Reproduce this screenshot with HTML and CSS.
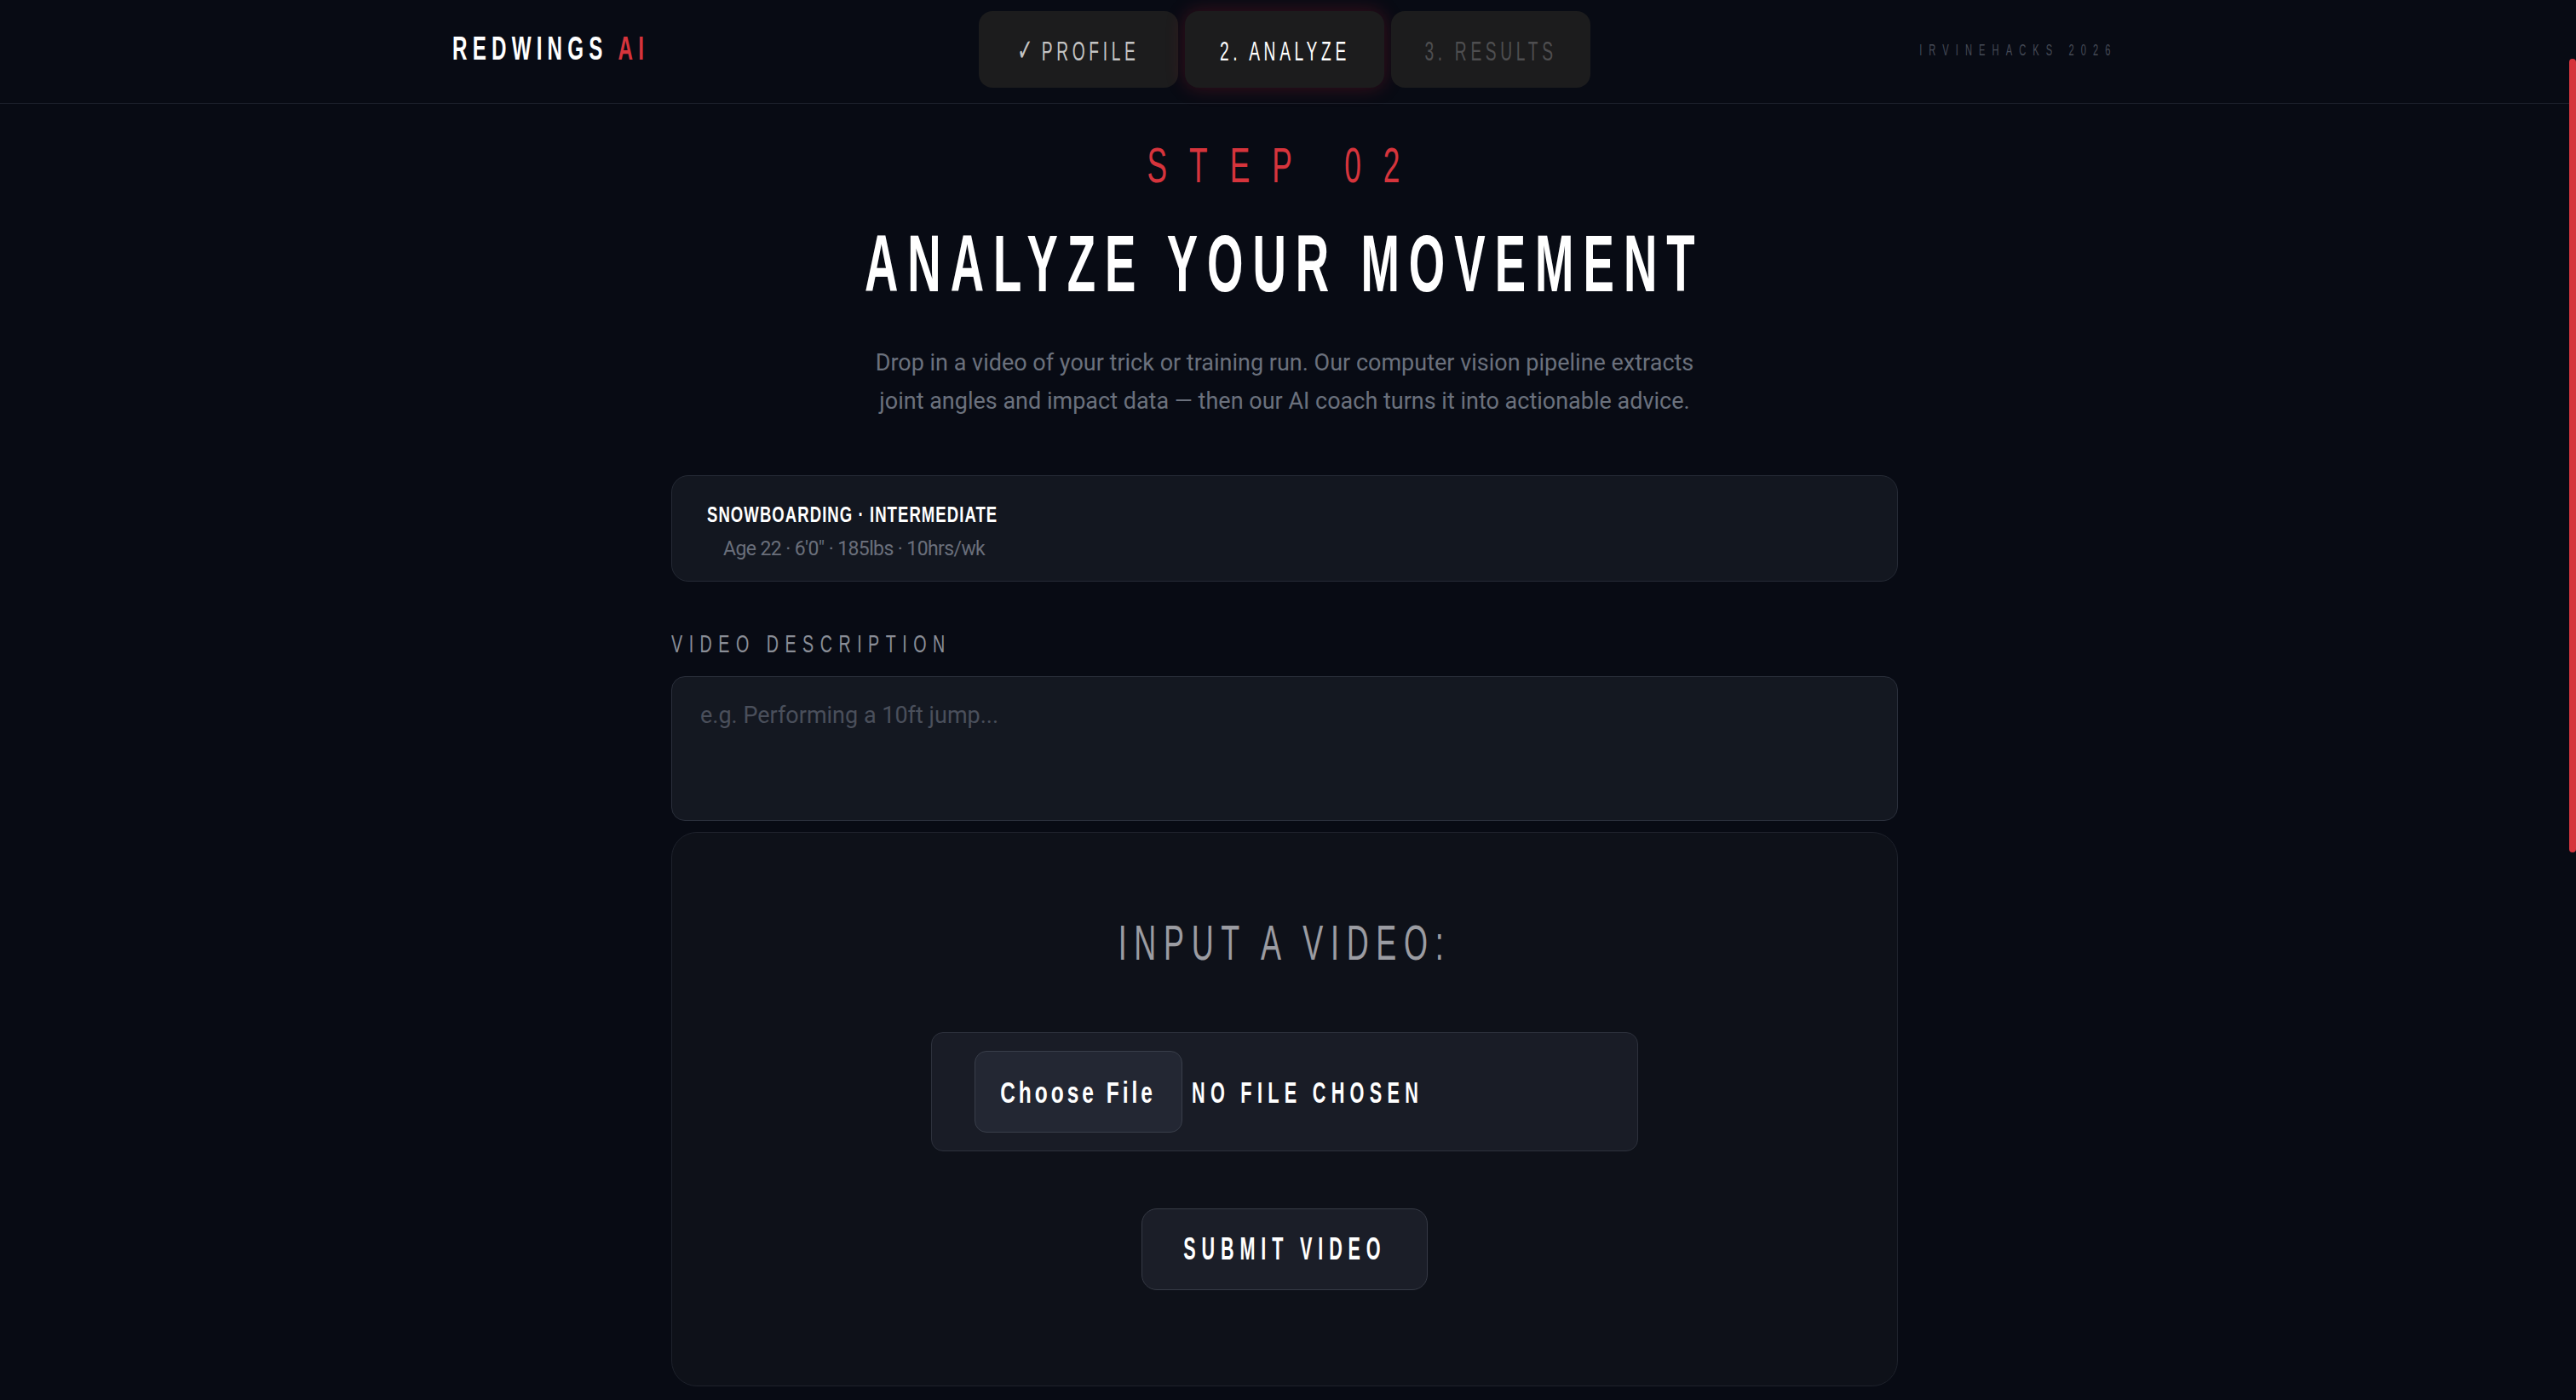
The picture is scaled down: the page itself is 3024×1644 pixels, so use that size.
FILE: index.html
```html
<!DOCTYPE html>
<html lang="en">
<head>
<meta charset="utf-8">
<title>RedWings AI — Analyze</title>
<link rel="stylesheet" href="styles.css">
</head>
<body>
<div class="page">
  <header class="topbar">
    <div class="topbar-inner">
      <div class="brand">REDWINGS <em>AI</em></div>
      <nav class="steps">
        <div class="step done"><span class="step-text"><span class="check">✓</span> PROFILE</span></div>
        <div class="step active"><span class="step-text">2. ANALYZE</span></div>
        <div class="step todo"><span class="step-text">3. RESULTS</span></div>
      </nav>
      <div class="event">IRVINEHACKS 2026</div>
    </div>
  </header>
  <main class="main">
    <div class="eyebrow">STEP 02</div>
    <h1 class="title"><span class="title-text">ANALYZE YOUR MOVEMENT</span></h1>
    <p class="lead">Drop in a video of your trick or training run. Our computer vision pipeline extracts joint angles and impact data — then our AI coach turns it into actionable advice.</p>
    <section class="profile-card">
      <div class="profile-title">SNOWBOARDING · INTERMEDIATE</div>
      <div class="profile-meta">Age 22 · 6'0" · 185lbs · 10hrs/wk</div>
    </section>
    <label class="field-label" for="desc">VIDEO DESCRIPTION</label>
    <textarea id="desc" class="desc" placeholder="e.g. Performing a 10ft jump..."></textarea>
    <section class="upload-card">
      <h2 class="upload-title">INPUT A VIDEO:</h2>
      <div class="file-box">
        <label class="file-btn"><span class="file-btn-text">Choose File</span></label>
        <span class="file-name">NO FILE CHOSEN</span>
      </div>
      <button class="submit" type="button"><span class="submit-text">SUBMIT VIDEO</span></button>
    </section>
  </main>
</div>
<div class="scroll-thumb"></div>
</body>
</html>
```

FILE: styles.css
```css
* { box-sizing: border-box; margin: 0; padding: 0; }

html, body {
  height: 100%;
  overflow: hidden;
  background: #080b14;
}

body {
  font-family: Roboto, "Liberation Sans", sans-serif;
  color: #ffffff;
  padding-right: 8px;
}

/* condensed display text: Liberation Sans narrowed horizontally */
.brand, .step-text, .event, .eyebrow, .title, .profile-title,
.field-label, .upload-title, .file-btn-text, .file-name, .submit-text {
  font-family: "Liberation Sans", Arial, sans-serif;
  line-height: 1;
  white-space: nowrap;
}

/* ---------- top bar ---------- */
.topbar {
  border-bottom: 1px solid #1b1f2a;
}

.topbar-inner {
  max-width: 1955px;
  height: 121px;
  margin: 0 auto;
  display: grid;
  grid-template-columns: 1fr auto 1fr;
  align-items: start;
}

.brand {
  margin-top: 37px;
  font-size: 39px;
  font-weight: 700;
  letter-spacing: 10px;
  transform: scaleX(0.62);
  transform-origin: left center;
}

.brand em {
  font-style: normal;
  color: #d6343c;
}

.steps {
  margin-top: 13px;
  display: flex;
  gap: 8px;
}

.step {
  width: 234px;
  height: 90px;
  border-radius: 16px;
  background: #1c1c1d;
  display: flex;
  align-items: center;
  justify-content: center;
  padding-top: 5px;
}

.step.active {
  box-shadow: 0 0 22px rgba(190, 30, 45, 0.28);
}

.step-text {
  display: block;
  font-size: 31px;
  letter-spacing: 7.5px;
  transform: scaleX(0.62);
  transform-origin: center;
}

.check {
  font-family: "DejaVu Sans", sans-serif;
  font-size: 36px;
  font-weight: 700;
  line-height: 0;
  letter-spacing: 0;
}

.step.done .step-text { color: #c4c4c4; }
.step.active .step-text { color: #ffffff; }
.step.todo .step-text { color: #4e4e50; }

.event {
  margin-top: 50px;
  text-align: right;
  font-size: 18px;
  letter-spacing: 13px;
  color: #454a56;
  transform: scaleX(0.62);
  transform-origin: right center;
}

/* ---------- main ---------- */
.main {
  max-width: 1440px;
  margin: 0 auto;
  padding-top: 44px;
}

.eyebrow {
  text-align: center;
  font-size: 57px;
  letter-spacing: 42px;
  color: #d6343c;
  transform: scaleX(0.62);
  transform-origin: center;
}

.title {
  margin-top: 40px;
  display: flex;
  justify-content: center;
  font-size: 94px;
  font-weight: 700;
  color: #ffffff;
}

.title-text {
  flex: none;
  display: block;
  letter-spacing: 19px;
  transform: scaleX(0.58);
  transform-origin: center;
}

.lead {
  max-width: 1000px;
  margin: 47px auto 0;
  text-align: center;
  font-size: 27px;
  line-height: 45px;
  color: #6b717d;
}

.profile-card {
  margin-top: 64px;
  padding: 32px 41px 24px;
  background: #131720;
  border: 1px solid #252a35;
  border-radius: 20px;
}

.profile-title {
  font-size: 26.5px;
  font-weight: 700;
  letter-spacing: 1.5px;
  color: #ffffff;
  transform: scaleX(0.7);
  transform-origin: left center;
}

.profile-meta {
  margin-top: 13px;
  padding-left: 19px;
  font-size: 23px;
  line-height: 27.6px;
  letter-spacing: -0.6px;
  color: #6a6f7b;
}

.field-label {
  display: block;
  margin-top: 59px;
  font-size: 29px;
  letter-spacing: 11px;
  color: #8a8e97;
  transform: scaleX(0.68);
  transform-origin: left center;
}

.desc {
  display: block;
  width: 100%;
  height: 170px;
  margin-top: 23px;
  padding: 27px 33px;
  background: #141821;
  border: 1px solid #2a2f3b;
  border-radius: 16px;
  font-family: Roboto, "Liberation Sans", sans-serif;
  font-size: 27px;
  line-height: 1.4;
  color: #ffffff;
  resize: none;
  outline: none;
}

.desc::placeholder {
  color: #4a4f5b;
}

/* ---------- upload card ---------- */
.upload-card {
  margin-top: 13px;
  padding: 100px 0 112px;
  background: #0e1119;
  border: 1px solid #1e222c;
  border-radius: 30px;
  display: flex;
  flex-direction: column;
  align-items: center;
}

.upload-title {
  align-self: stretch;
  text-align: center;
  font-size: 58px;
  font-weight: 400;
  letter-spacing: 14px;
  color: #9b9ca2;
  transform: scaleX(0.62);
  transform-origin: center;
}

.file-box {
  margin-top: 76px;
  width: 830px;
  height: 140px;
  padding-left: 50px;
  display: flex;
  align-items: center;
  gap: 11px;
  background: #191c26;
  border: 1px solid #2d313c;
  border-radius: 14px;
}

.file-btn {
  width: 244px;
  height: 96px;
  display: flex;
  align-items: center;
  justify-content: center;
  background: #232733;
  border: 1px solid #393e4a;
  border-radius: 14px;
}

.file-btn-text {
  display: block;
  font-size: 35px;
  font-weight: 700;
  letter-spacing: 5.7px;
  color: #ffffff;
  transform: scaleX(0.7);
  transform-origin: center;
}

.file-name {
  display: block;
  font-size: 35px;
  font-weight: 700;
  letter-spacing: 10.1px;
  color: #ffffff;
  transform: scaleX(0.62);
  transform-origin: left center;
}

.submit {
  margin-top: 67px;
  width: 336px;
  height: 96px;
  display: flex;
  align-items: center;
  justify-content: center;
  background: #1b1e28;
  border: 1px solid #363a45;
  border-radius: 18px;
  cursor: pointer;
}

.submit-text {
  display: block;
  font-size: 36px;
  font-weight: 700;
  letter-spacing: 11.4px;
  color: #ffffff;
  transform: scaleX(0.6);
  transform-origin: center;
}

/* scrollbar thumb drawn over the right edge */
.scroll-thumb {
  position: fixed;
  top: 69px;
  right: 0;
  width: 8px;
  height: 932px;
  border-radius: 4px;
  background: #d6343c;
}
```
